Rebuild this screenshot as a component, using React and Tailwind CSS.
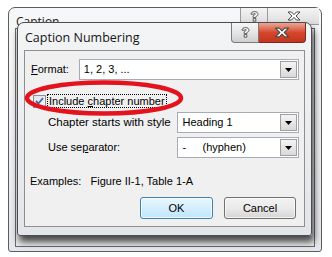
import React from "react";

const ui = { fontFamily: '"Liberation Sans", Arial, sans-serif' };
const titleFont = { fontFamily: '"Open Sans", "Noto Sans", sans-serif' };

const DropArrow = () => (
  <div className="w-[17px] h-full border border-[#a0a0a0] bg-gradient-to-b from-[#f4f4f4] to-[#d9d9d9] flex items-center justify-center">
    <svg width="7" height="4" viewBox="0 0 7 4">
      <path d="M0 0 H7 L3.5 4 Z" fill="#000" />
    </svg>
  </div>
);

const Combo = ({ width, children }) => (
  <div
    className={`${width} h-[21px] border border-[#a5acb5] bg-white flex items-stretch p-[1px]`}
  >
    <div className="flex-1 flex items-center pl-[3px] text-[11px] text-black">
      {children}
    </div>
    <DropArrow />
  </div>
);

const OutlineX = ({ w = 14, h = 10 }) => (
  <svg width={w} height={h} viewBox="0 0 14 10">
    <path
      d="M1 1 H4.5 L7 3.6 L9.5 1 H13 L9 5 L13 9 H9.5 L7 6.4 L4.5 9 H1 L5 5 Z"
      fill="#fff"
      stroke="#4a4a4a"
      strokeWidth="1"
      strokeLinejoin="round"
    />
  </svg>
);

const OutlineQ = () => (
  <svg width="9" height="11" viewBox="0 0 9 11">
    <path
      d="M1 3.2 C1 1.5 2.5 0.6 4.5 0.6 C6.6 0.6 8 1.6 8 3.2 C8 4.6 6.6 5.1 5.8 5.6 V6.6 H3.2 V5 C3.2 4.2 5.4 3.8 5.4 3.1 C5.4 2.6 5 2.4 4.5 2.4 C4 2.4 3.6 2.7 3.6 3.2 Z M3.2 7.6 H5.8 V10.2 H3.2 Z"
      fill="#fff"
      stroke="#4a4a4a"
      strokeWidth="0.9"
      strokeLinejoin="round"
    />
  </svg>
);

const App = () => {
  return (
    <div className="relative w-[332px] h-[257px] bg-white overflow-hidden" style={ui}>
      {/* Caption window behind */}
      <div className="absolute left-[8px] top-[7px] w-[314px] h-[245px] rounded-t-[7px] rounded-b-[3px] border border-[#5c5c5c] bg-gradient-to-b from-[#f6f7f8] to-[#e4e7eb] flex flex-col">
        <div className="h-[20px] flex items-start">
          <div className="pl-[7px] pt-[5px] text-[12px] text-[#1a1a1a]" style={titleFont}>
            Caption
          </div>
          <div className="ml-auto mr-[2px] flex">
            <div className="w-[27px] h-[17px] border-l border-b border-[#9a9a9a] bg-gradient-to-b from-[#f4f4f4] to-[#dcdcdc] flex items-center justify-center">
              <OutlineQ />
            </div>
            <div className="w-[52px] h-[17px] border-l border-b border-[#9a9a9a] bg-gradient-to-b from-[#f4f4f4] to-[#dcdcdc] flex items-center justify-center">
              <OutlineX />
            </div>
          </div>
        </div>
        <div className="flex-1 mx-[6px] mb-[4px] border border-[#6a6a6a] bg-[#ececec]" />
      </div>

      {/* Caption Numbering dialog */}
      <div className="absolute left-[17px] top-[22px] w-[295px] h-[214px] rounded-t-[7px] rounded-b-[3px] border border-[#4d4d4d] bg-gradient-to-b from-[#f3f4f6] to-[#e2e5e9] shadow-[2px_6px_7px_rgba(0,0,0,0.7)] flex flex-col">
        <div className="h-[27px] flex items-start">
          <div className="pl-[7px] pt-[6px] text-[12.5px] text-[#151515]" style={titleFont}>
            Caption Numbering
          </div>
          <div className="ml-auto mr-[5px] flex">
            <div className="w-[28px] h-[20px] rounded-bl-[4px] border border-t-0 border-[#7b7b7b] bg-gradient-to-b from-[#f6f6f6] via-[#e6e6e6] to-[#cfcfcf] flex items-center justify-center">
              <OutlineQ />
            </div>
            <div className="w-[47px] h-[20px] rounded-br-[4px] border border-t-0 border-l-0 border-[#7a2a20] bg-gradient-to-b from-[#eaa595] via-[#d4472c] to-[#c5341d] flex items-center justify-center">
              <OutlineX w={16} h={11} />
            </div>
          </div>
        </div>

        <div className="mx-[6px] h-[177px] border border-[#8e8f8f] bg-[#f0f0f0] flex flex-col text-[11px] text-black">
          <div className="mt-[8px] flex items-center pl-[6px] pr-[5px]">
            <div className="w-[48px]">
              <span className="underline">F</span>ormat:
            </div>
            <Combo width="w-[221px]">1, 2, 3, ...</Combo>
          </div>

          <div className="mt-[14px] h-[14px] flex items-center pl-[8px]">
            <div className="w-[13px] h-[13px] border border-[#8f8f8f] bg-gradient-to-br from-[#dde3ea] to-[#f6f8fa] flex items-center justify-center">
              <svg width="9" height="8" viewBox="0 0 9 8">
                <path d="M1 4 L3.5 6.5 L8 1" fill="none" stroke="#4b63a8" strokeWidth="1.8" />
              </svg>
            </div>
            <div className="ml-[1px] px-[1px] border border-dotted border-black leading-[12px]">
              Include <span className="underline">c</span>hapter number
            </div>
          </div>

          <div className="mt-[4px] flex items-center pl-[23px] pr-[5px]">
            <div className="w-[130px] text-[11.5px]">Chapter starts with style</div>
            <Combo width="w-[122px]">Heading 1</Combo>
          </div>

          <div className="mt-[4px] flex items-center pl-[23px] pr-[5px]">
            <div className="w-[130px]">
              Use se<span className="underline">p</span>arator:
            </div>
            <Combo width="w-[122px]">
              <span className="w-[20px]">-</span>(hyphen)
            </Combo>
          </div>

          <div className="mt-[16px] pl-[5px] h-[14px] leading-[14px]">
            Examples:&nbsp;&nbsp; Figure II-1, Table 1-A
          </div>

          <div className="mt-[9px] flex justify-end gap-[11px] pr-[8px]">
            <button className="w-[73px] h-[22px] rounded-[3px] border border-[#3c7fb1] bg-gradient-to-b from-[#eaf6fd] to-[#bee6fd] shadow-[inset_0_0_0_1px_rgba(255,255,255,0.8)] text-[11px]">
              OK
            </button>
            <button className="w-[72px] h-[22px] rounded-[3px] border border-[#707070] bg-gradient-to-b from-[#f2f2f2] via-[#ebebeb] to-[#d5d5d5] shadow-[inset_0_0_0_1px_rgba(255,255,255,0.7)] text-[11px]">
              Cancel
            </button>
          </div>
        </div>
      </div>

      {/* red annotation ellipse */}
      <svg className="absolute left-0 top-0 pointer-events-none" width="332" height="257">
        <ellipse cx="104" cy="98" rx="77" ry="15.5" fill="none" stroke="#e4121c" strokeWidth="4.5" />
      </svg>
    </div>
  );
};

export default App;
